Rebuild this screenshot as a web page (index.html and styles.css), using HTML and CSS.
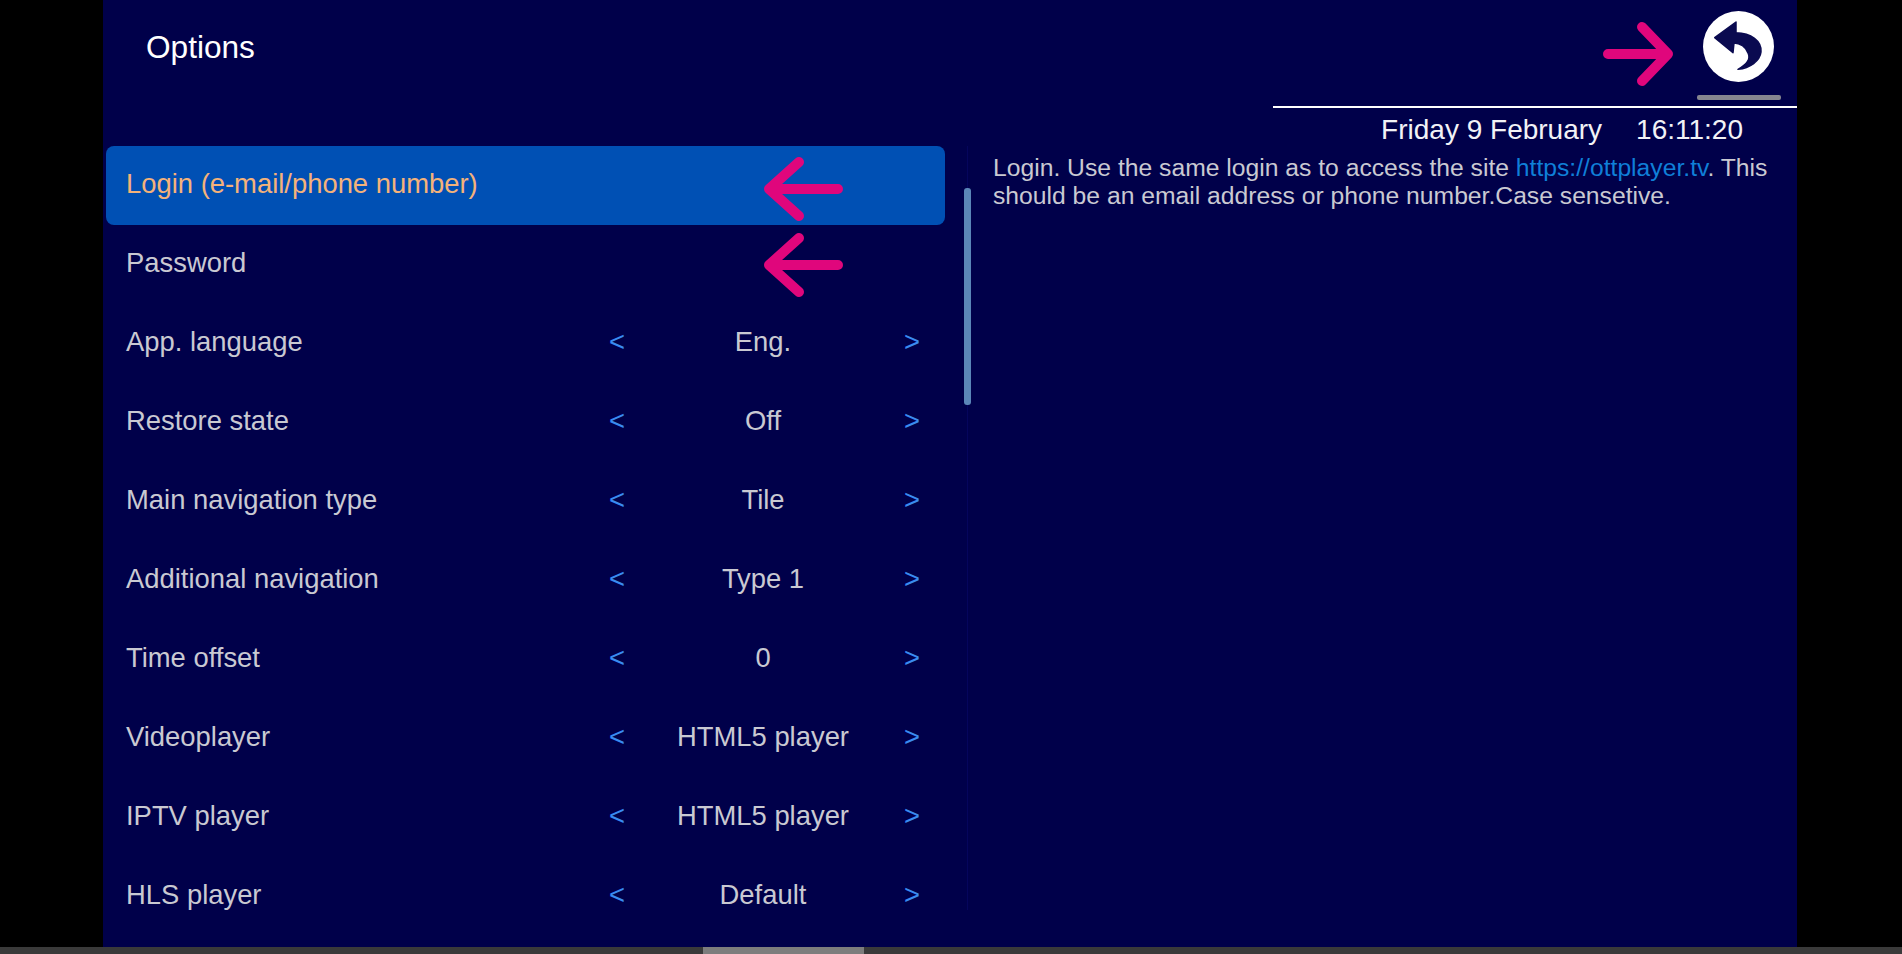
FILE: index.html
```html
<!DOCTYPE html>
<html lang="en">
<head>
    <meta charset="UTF-8">
    <meta name="viewport" content="width=device-width, initial-scale=1.0">
    <title>Options</title>
    <link rel="stylesheet" href="styles.css">
</head>
<body>
    <div class="panel">
        <div class="header">
            <h1 class="title">Options</h1>
            <div class="header-right">
                <div class="back-wrap">
                    <div class="back-btn">
                        <svg viewBox="0 0 71 71" width="71" height="71">
                            <circle cx="35.5" cy="35.5" r="35.5" fill="#fff"/>
                            <path d="M11.7 26.7 L33 11 L33 21.7 C48 22 59 30 58 41 C57 50 47 57 35 58.3 C43 54 48 48 45 42 C43 36 37 32 31 32 L30 41.7 Z" fill="#0a0a50" stroke="#0a0a50" stroke-width="1.5" stroke-linejoin="round"/>
                        </svg>
                    </div>
                    <div class="back-underline"></div>
                </div>
                <div class="clock">
                    <span>Friday 9 February</span>
                    <span>16:11:20</span>
                </div>
            </div>
        </div>

        <div class="content">
            <div class="list">
                <div class="row row-active"><span class="label">Login (e-mail/phone number)</span></div>
                <div class="row"><span class="label">Password</span></div>
                <div class="row"><span class="label">App. language</span><span class="nav">&lt;</span><span class="value">Eng.</span><span class="nav">&gt;</span></div>
                <div class="row"><span class="label">Restore state</span><span class="nav">&lt;</span><span class="value">Off</span><span class="nav">&gt;</span></div>
                <div class="row"><span class="label">Main navigation type</span><span class="nav">&lt;</span><span class="value">Tile</span><span class="nav">&gt;</span></div>
                <div class="row"><span class="label">Additional navigation</span><span class="nav">&lt;</span><span class="value">Type 1</span><span class="nav">&gt;</span></div>
                <div class="row"><span class="label">Time offset</span><span class="nav">&lt;</span><span class="value">0</span><span class="nav">&gt;</span></div>
                <div class="row"><span class="label">Videoplayer</span><span class="nav">&lt;</span><span class="value">HTML5 player</span><span class="nav">&gt;</span></div>
                <div class="row"><span class="label">IPTV player</span><span class="nav">&lt;</span><span class="value">HTML5 player</span><span class="nav">&gt;</span></div>
                <div class="row"><span class="label">HLS player</span><span class="nav">&lt;</span><span class="value">Default</span><span class="nav">&gt;</span></div>
            </div>
            <div class="track"><div class="thumb"></div></div>
            <p class="desc">Login. Use the same login as to access the site <a href="#">https://ottplayer.tv</a>. This should be an email address or phone number.Case sensetive.</p>
        </div>

        <!-- pink annotation arrows drawn over the screen -->
        <svg class="mark mark-back" viewBox="0 0 72 64" width="72" height="64">
            <path d="M5 32 H64 M39 5 L65 32 L39 59" fill="none" stroke="#e0067c" stroke-width="10" stroke-linecap="round" stroke-linejoin="round"/>
        </svg>
        <svg class="mark mark-login" viewBox="0 0 80 64" width="80" height="64">
            <path d="M75 32 H6 M36 5 L6 32 L36 59" fill="none" stroke="#e0067c" stroke-width="10" stroke-linecap="round" stroke-linejoin="round"/>
        </svg>
        <svg class="mark mark-password" viewBox="0 0 80 64" width="80" height="64">
            <path d="M75 32 H6 M36 5 L6 32 L36 59" fill="none" stroke="#e0067c" stroke-width="10" stroke-linecap="round" stroke-linejoin="round"/>
        </svg>
    </div>

    <div class="hscroll"><div class="hscroll-thumb"></div></div>
</body>
</html>
```

FILE: styles.css
```css
* { margin: 0; padding: 0; box-sizing: border-box; }
html, body { height: 100%; overflow: hidden; }
body { display: flex; flex-direction: column; background: #000; font-family: "Liberation Sans", Arial, sans-serif; }

.panel { position: relative; flex: 1; min-height: 0; width: 1694px; margin-left: 103px; background: #00004a; overflow: hidden; }

.header { display: flex; justify-content: space-between; height: 146px; }
.title { padding: 27px 0 0 43px; font-size: 31.6px; font-weight: normal; line-height: 40px; color: #fff; }
.header-right { display: flex; flex-direction: column; width: 524px; }
.back-wrap { display: flex; flex-direction: column; align-items: center; align-self: flex-end; width: 84px; height: 106px; margin-right: 16px; padding-top: 11px; }
.back-btn { height: 71px; margin: 0 2px 13px 0; }
.back-underline { width: 84px; height: 5px; border-radius: 2px; background: #85858f; }
.clock { display: flex; justify-content: flex-end; gap: 34px; height: 40px; padding-right: 54px; border-top: 2px solid #fff; font-size: 28px; line-height: 43px; color: #f2f2f6; }

.content { display: flex; }
.list { width: 839px; margin-left: 3px; flex-shrink: 0; }
.row { display: grid; grid-template-columns: 1fr 30px 265px 30px; align-items: center; height: 79px; padding: 0 18px 4px 20px; font-size: 27.4px; color: #c9c9d2; }
.row-active { background: #0050b4; border-radius: 8px; }
.row-active .label { color: #f4b27a; }
.nav { text-align: center; color: #3a8cf0; }
.value { padding-right: 3px; text-align: center; }

.track { position: relative; width: 7px; height: 764px; margin-left: 19px; flex-shrink: 0; }
.track::before { content: ""; position: absolute; left: 3px; top: 0; bottom: 0; width: 1px; background: #05055c; }
.thumb { position: relative; height: 217px; margin-top: 42px; border-radius: 3px; background: #5b86b8; }

.desc { width: 785px; margin-left: 22px; padding-top: 8px; font-size: 24.7px; line-height: 28px; color: #c9c9d2; }
.desc a { color: #0f7fd8; text-decoration: none; }

.mark { position: absolute; }
.mark-back { left: 1500px; top: 22px; }
.mark-login { left: 660px; top: 157px; }
.mark-password { left: 660px; top: 233px; }

.hscroll { flex-shrink: 0; height: 7px; background: #3a3a3a; }
.hscroll-thumb { width: 161px; height: 100%; margin-left: 703px; background: #7d7d7d; }
```
